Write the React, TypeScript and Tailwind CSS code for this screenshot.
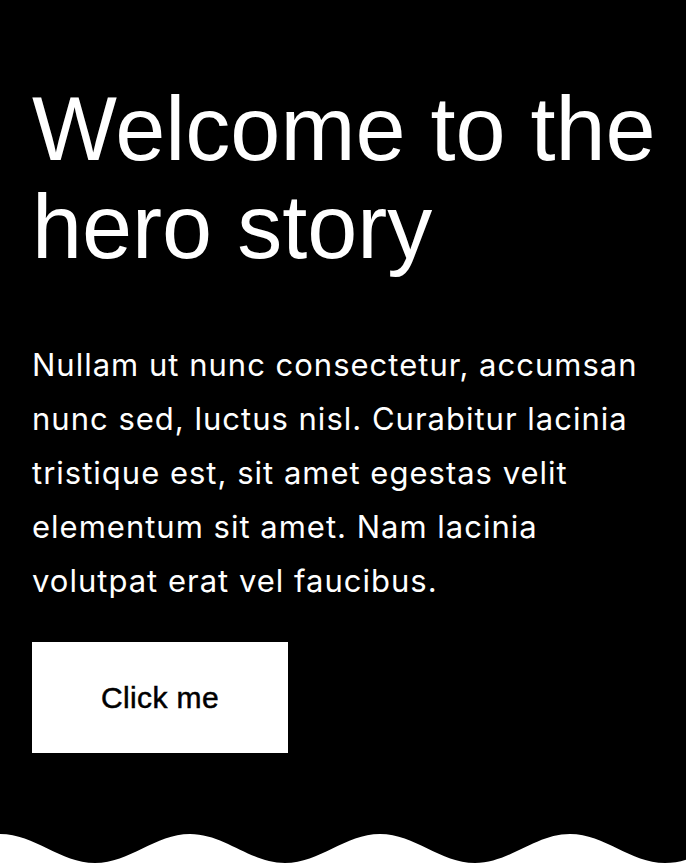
export default function App() {
  return (
    <section className="relative flex min-h-screen flex-col bg-black text-white">
      <div className="px-8 pt-20">
        <h1 className="-mr-6 font-['Liberation_Sans',Arial,sans-serif] text-[90px] font-normal leading-[98px]">
          Welcome to the hero story
        </h1>
        <p className="mt-[62px] font-['Inter',sans-serif] text-[31px] leading-[54px] tracking-[1px]">
          Nullam ut nunc consectetur, accumsan nunc sed, luctus nisl. Curabitur lacinia tristique est, sit amet
          egestas velit elementum sit amet. Nam lacinia volutpat erat vel faucibus.
        </p>
        <button
          type="button"
          className="mt-[34px] flex h-[111px] w-[256px] items-center justify-center bg-white font-['Liberation_Sans',Arial,sans-serif] text-[30px] tracking-[0.4px] text-black [-webkit-text-stroke:0.5px_black]"
        >
          Click me
        </button>
      </div>

      {/* wave */}
      <svg
        className="mt-auto block h-[32px] w-full"
        viewBox="0 0 686 32"
        preserveAspectRatio="none"
        aria-hidden="true"
      >
        <path
          fill="#fff"
          d="M0 0 C35 0 60 29 95 29 C130 29 155 0 190 0 C225 0 250 29 285 29 C320 29 345 0 380 0 C415 0 440 29 475 29 C510 29 535 0 570 0 C605 0 630 29 665 29 C700 29 725 0 760 0 V32 H0 Z"
        />
      </svg>
    </section>
  );
}
